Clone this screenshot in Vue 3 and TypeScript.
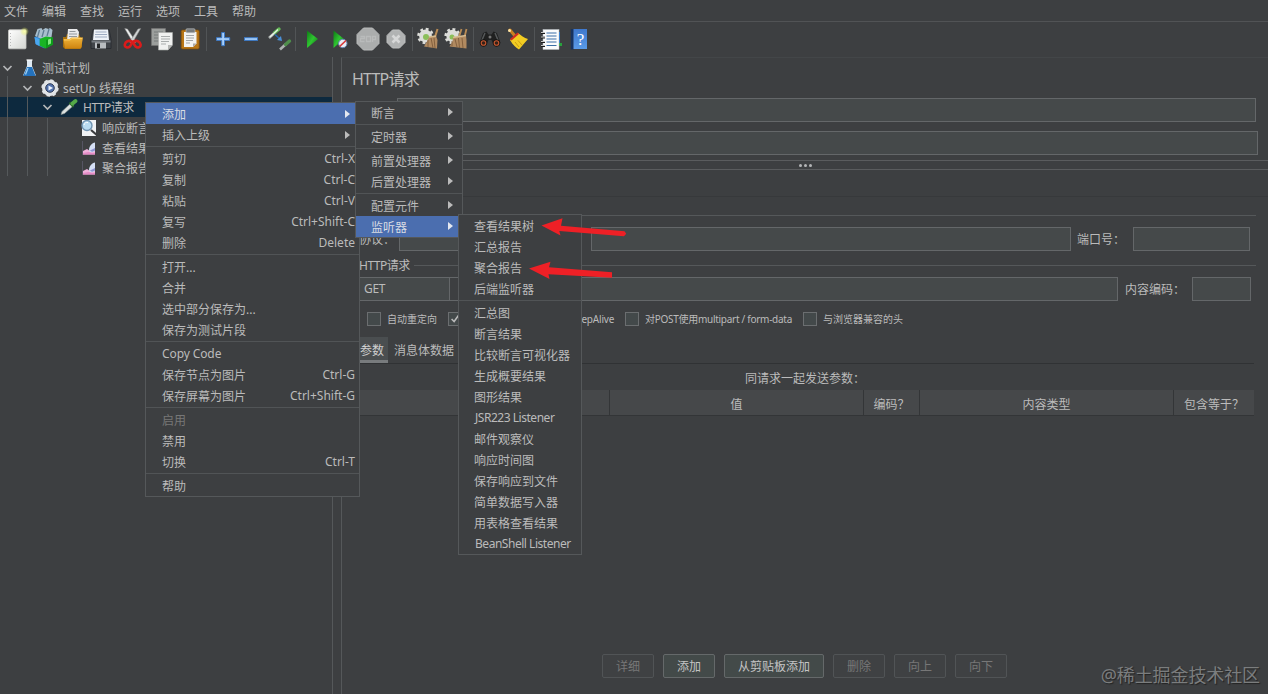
<script setup lang="ts">
interface MenuItem {
  label?: string
  keys?: string
  sub?: boolean
  active?: boolean
  disabled?: boolean
  sep?: boolean
}

const sep: MenuItem = { sep: true }
const menuBar: string[] = ['文件', '编辑', '查找', '运行', '选项', '工具', '帮助']

const contextMenu: MenuItem[] = [
  { label: '添加', sub: true, active: true },
  { label: '插入上级', sub: true },
  sep,
  { label: '剪切', keys: 'Ctrl-X' },
  { label: '复制', keys: 'Ctrl-C' },
  { label: '粘贴', keys: 'Ctrl-V' },
  { label: '复写', keys: 'Ctrl+Shift-C' },
  { label: '删除', keys: 'Delete' },
  sep,
  { label: '打开...' },
  { label: '合并' },
  { label: '选中部分保存为...' },
  { label: '保存为测试片段' },
  sep,
  { label: 'Copy Code' },
  { label: '保存节点为图片', keys: 'Ctrl-G' },
  { label: '保存屏幕为图片', keys: 'Ctrl+Shift-G' },
  sep,
  { label: '启用', disabled: true },
  { label: '禁用' },
  { label: '切换', keys: 'Ctrl-T' },
  sep,
  { label: '帮助' },
]

const addMenu: MenuItem[] = [
  { label: '断言', sub: true },
  sep,
  { label: '定时器', sub: true },
  sep,
  { label: '前置处理器', sub: true },
  { label: '后置处理器', sub: true },
  sep,
  { label: '配置元件', sub: true },
  { label: '监听器', sub: true, active: true },
]

const listenerMenu: MenuItem[] = [
  { label: '查看结果树' },
  { label: '汇总报告' },
  { label: '聚合报告' },
  { label: '后端监听器' },
  sep,
  { label: '汇总图' },
  { label: '断言结果' },
  { label: '比较断言可视化器' },
  { label: '生成概要结果' },
  { label: '图形结果' },
  { label: 'JSR223 Listener' },
  { label: '邮件观察仪' },
  { label: '响应时间图' },
  { label: '保存响应到文件' },
  { label: '简单数据写入器' },
  { label: '用表格查看结果' },
  { label: 'BeanShell Listener' },
]

const menus = [
  { cls: 'menu-main', items: contextMenu },
  { cls: 'menu-add', items: addMenu },
  { cls: 'menu-listener', items: listenerMenu },
]

const isLatin = (s?: string): boolean => /^[\x20-\x7e]+$/.test(s ?? '')

const buttons = [
  { label: '详细', enabled: false },
  { label: '添加', enabled: true },
  { label: '从剪贴板添加', enabled: true, wide: true },
  { label: '删除', enabled: false },
  { label: '向上', enabled: false },
  { label: '向下', enabled: false },
]
</script>

<template>
  <div class="window">
    <svg class="defs" width="0" height="0">
      <defs>
        <linearGradient id="gPlay" x1="0" y1="0" x2="1" y2="1"><stop offset="0" stop-color="#0d7a14" /><stop offset=".5" stop-color="#2fc431" /><stop offset="1" stop-color="#0b6d10" /></linearGradient>
        <linearGradient id="gFolder" x1="0" y1="0" x2="0" y2="1"><stop offset="0" stop-color="#f0b53a" /><stop offset="1" stop-color="#cf8410" /></linearGradient>
        <linearGradient id="gPaper" x1="0" y1="0" x2="1" y2="1"><stop offset="0" stop-color="#fff" /><stop offset="1" stop-color="#d4d6d2" /></linearGradient>
        <linearGradient id="gBook" x1="0" y1="0" x2="0" y2="1"><stop offset="0" stop-color="#3f78cc" /><stop offset="1" stop-color="#5a9be8" /></linearGradient>
        <radialGradient id="gSun"><stop offset="0" stop-color="#fbffb0" /><stop offset="1" stop-color="#e5f05a" stop-opacity="0" /></radialGradient>
      </defs>
    </svg>

    <nav class="menubar">
      <span v-for="m in menuBar" :key="m">{{ m }}</span>
    </nav>

    <div class="toolbar">
      <svg class="ico" viewBox="0 0 28 28"><rect x="5.5" y="4.8" width="17.5" height="19" rx="1" fill="url(#gPaper)" stroke="#c9cac6" stroke-width=".8" /><path d="M7.5 8v13" stroke="#bbb" stroke-dasharray="1 2" /><circle cx="21.5" cy="6.5" r="4.5" fill="url(#gSun)" /></svg>
      <svg class="ico" viewBox="0 0 28 28"><path d="M3.500 12l10-2v13.500L5 19.500z" fill="#2a7fd0" /><path d="M4 11L6.500 4l4-1 1 2 3-2 3 1 1.500-1 2.500 2-1 7-8 3z" fill="#a9bfce" /><path d="M8.500 5l-2 7M13 5l-2 7M18 4l-2 7" stroke="#5f7c92" stroke-width="1.300" /><path d="M8.500 14l6.500-2.500 7 1v7l-7.500 4-6-3z" fill="#19b524" /><path d="M15 15l7-2.500v7l-7 4z" fill="#0d9a1a" /><path d="M17 14.500l3-1v5l-3 1.500z" fill="#7fe97d" /><path d="M3.500 12l5 2v7l-4-2z" fill="#4ba6ef" /></svg>
      <svg class="ico" viewBox="0 0 28 28"><path d="M4 12h3l1-3h12l1 3 2 1v9l-2 2H6l-2-2z" fill="#aa720d" /><path d="M9 4h9l2 3-1 9H8z" fill="#e9eaeb" /><path d="M10.500 6.500h6M10 9h8M10 11.500h8" stroke="#92989c" stroke-width="1" /><path d="M4.500 14h6l2-1.500h11.500l-2 11H6z" fill="url(#gFolder)" /><path d="M5 15h6l2-1.500h10" stroke="#ffd268" fill="none" stroke-width=".8" /></svg>
      <svg class="ico" viewBox="0 0 28 28"><path d="M6 4.500h16L24 14v9.500H4V14z" fill="#404449" stroke="#272a2e" stroke-width=".8" /><path d="M7 4.500h14l1 10.500H6z" fill="#eef2f8" /><path d="M8.500 7h11M8 9.500h12M8 12h12" stroke="#9eabc1" /><path d="M4.500 15.500h19v2h-19z" fill="#777c82" /><rect x="8" y="17.500" width="11" height="6" fill="#b9bdc1" /><rect x="10" y="18.500" width="3" height="4.500" fill="#232527" /></svg>
      <i class="tsep" />
      <svg class="ico" viewBox="0 0 28 28"><path d="M4.700 3.500L7.500 4l8.500 13-2.500 1.500z" fill="#eceeed" stroke="#888" stroke-width=".5" /><path d="M20.700 3.500L18 4l-8.500 13 2.500 1.500z" fill="#cfd2d2" stroke="#888" stroke-width=".5" /><path d="M11.800 16.500c-3-1.500-6.500 0-7 3-.3 3 3 3.800 5 2 1.500-1.500 2-2.500 2-5zM13.600 16.500c3-1.500 6.500 0 7 3 .3 3-3 3.800-5 2-1.500-1.500-2-2.500-2-5z" fill="none" stroke="#db1b1b" stroke-width="2.600" /></svg>
      <svg class="ico" viewBox="0 0 28 28"><path d="M3.500 3.500h14v17h-14z" fill="#9c9f9d" stroke="#777" stroke-width=".6" /><path d="M6 7h9M6 10h6M6 13h6M6 16h5" stroke="#777b7b" /><path d="M10.500 7.500h14V20l-4.500 5h-9.500z" fill="#f0f1f0" stroke="#a9aba9" stroke-width=".6" /><path d="M13 11.500h9M13 14h9M13 16.500h8M13 19h5" stroke="#a9adad" /><path d="M24.500 20h-4.500v5z" fill="#b3b5b3" /></svg>
      <svg class="ico" viewBox="0 0 28 28"><rect x="5.200" y="5" width="18" height="19" rx="1.500" fill="#b87616" stroke="#7d4d0a" stroke-width=".7" /><path d="M8 7h12.500v11.500l-3.500 3.500H8z" fill="#f3f3f1" /><path d="M10 10.500h8M10 13h8M10 15.500h7M10 18h4" stroke="#a1a5a6" /><path d="M20.500 18.500H17V22z" fill="#aaa" /><rect x="10" y="3.800" width="9" height="4" rx="1" fill="#777b7c" stroke="#c6c8c9" stroke-width=".6" /></svg>
      <i class="tsep" />
      <svg class="ico" viewBox="0 0 28 28"><path d="M12.700 7.500h2.800v5.200h5.200v2.700h-5.200v5.300h-2.800v-5.300H7.500v-2.700h5.200z" fill="#a8d0fb" stroke="#3b78c5" stroke-width="1" /></svg>
      <svg class="ico" viewBox="0 0 28 28"><rect x="7.500" y="12.700" width="13" height="2.700" fill="#a8d0fb" stroke="#3b78c5" /></svg>
      <svg class="ico" viewBox="0 0 28 28"><path d="M4 13l6.500-6" stroke="#aeb3b2" stroke-width="2.600" /><path d="M9.500 7.800L14 4" stroke="#63b956" stroke-width="3.400" stroke-linecap="round" /><path d="M5 12l8-7.500" stroke="#e9f3e7" stroke-width="1.300" /><path d="M15 24.500l6-5.500" stroke="#aeb3b2" stroke-width="2.600" /><path d="M20.500 19.500l4-3.500" stroke="#4f8e4b" stroke-width="3.400" stroke-linecap="round" /><path d="M10 9.500l5 4.500" stroke="#2768ad" stroke-width="1.600" /><path d="M17 16l-5-1 4-4z" fill="#4a8fd6" /></svg>
      <i class="tsep" />
      <svg class="ico" viewBox="0 0 28 28"><path d="M9 5.500L20 14 9 23z" fill="url(#gPlay)" /></svg>
      <svg class="ico" viewBox="0 0 28 28"><path d="M7.500 5.500L18 14 7.500 23z" fill="url(#gPlay)" /><circle cx="16.800" cy="18.500" r="4.200" fill="#e9eef6" stroke="#6385b2" /><path d="M13.600 21.500l6.400-6" stroke="#d83a3a" stroke-width="1.700" /></svg>
      <svg class="ico" viewBox="0 0 28 28"><path d="M9.500 3h9l6.500 6.500v9L18.500 25h-9L3 18.500v-9z" fill="#abadad" stroke="#b9bbbb" /><path d="M6.500 11.500h4v2h-4v3h4M12.500 11.500h4v5h-4zM18.500 17v-5.500h3v3h-3" fill="none" stroke="#b9bbbb" stroke-width="1.300" /></svg>
      <svg class="ico" viewBox="0 0 28 28"><path d="M10.500 5h7l5.500 5.500v7L17.500 23h-7L5 17.500v-7z" fill="#b1b3b3" stroke="#bdbfbf" /><path d="M10.500 10.500l7 7M17.500 10.500l-7 7" stroke="#d6d7d7" stroke-width="2.600" /></svg>
      <i class="tsep" />
      <svg class="ico" viewBox="0 0 28 28"><circle cx="10.500" cy="11" r="6.400" fill="#dcddd9" /><circle cx="10.500" cy="11" r="7" fill="none" stroke="#dcddd9" stroke-width="2.600" stroke-dasharray="2.800 2.700" /><circle cx="11" cy="12" r="3" fill="#8bbf59" /><path d="M20 12l2.500-8" stroke="#b98c55" stroke-width="2" /><path d="M14 12l7-1 1.500 4-.5 8.500-13-2 3-5z" fill="#b18a60" /><path d="M13 15l0 7M16 13l2 10M19 13l1 10" stroke="#775536" stroke-width=".8" /><path d="M14 12l7-1" stroke="#d6bb90" stroke-width="1.600" /></svg>
      <svg class="ico" viewBox="0 0 28 28"><circle cx="9.500" cy="11" r="6.200" fill="#dcddd9" /><circle cx="9.500" cy="11" r="6.800" fill="none" stroke="#dcddd9" stroke-width="2.600" stroke-dasharray="2.800 2.500" /><circle cx="9" cy="12" r="2.500" fill="#8bbf59" /><path d="M16 12l2.500-8M21.500 12l2-8" stroke="#b98c55" stroke-width="1.800" /><path d="M10 12.500l13-2 .5 4.500v8.500l-17-2 3-5z" fill="#b18a60" /><path d="M9 16l0 5M12 14l2 8M15.500 13l1 10M19 13l1 10" stroke="#775536" stroke-width=".8" /><path d="M10 12.500l13-2" stroke="#d6bb90" stroke-width="1.600" /></svg>
      <i class="tsep" />
      <svg class="ico" viewBox="0 0 28 28"><path d="M7 8l3.500-1.500 2 3h3l2-3L21 8l3.500 10-7 2-2-5h-3l-2 5-7-2z" fill="#1f2020" /><path d="M9 8l-3 7M19 8l3 7" stroke="#56595a" stroke-width="1.500" /><circle cx="7.500" cy="18" r="3.300" fill="#352219" stroke="#111" /><circle cx="20.500" cy="18" r="3.300" fill="#352219" stroke="#111" /><circle cx="7.500" cy="18" r="2.300" fill="none" stroke="#c4562f" stroke-width="1.100" /><circle cx="20.500" cy="18" r="2.300" fill="none" stroke="#c4562f" stroke-width="1.100" /><circle cx="14" cy="12" r="1.500" fill="#777" /></svg>
      <svg class="ico" viewBox="0 0 28 28"><path d="M6 5l5 6" stroke="#c88122" stroke-width="3" stroke-linecap="round" /><circle cx="5.500" cy="5.500" r="1.500" fill="#ffe3a2" /><path d="M6 15l8-7c3 2 6 5 10 6l-9 10.500C12 23 9 20 6 15z" fill="#f2cc22" /><path d="M11 17l4 5M14 15.500l4 4.500" stroke="#c39712" stroke-width=".9" /><path d="M6 14l7.500-6.500 1.500 1.500-7.500 6.500z" fill="#cf2c23" /></svg>
      <i class="tsep" />
      <svg class="ico" viewBox="0 0 28 28"><path d="M21 7h2v12h-2z" fill="#1269c9" /><path d="M22 18h3v3h-3z" fill="#27a23c" /><rect x="6" y="4.500" width="16" height="20" fill="#fafbfc" stroke="#b8bdc2" stroke-width=".5" /><path d="M9.500 8h10M9.500 11h10M9.500 14h10M9.500 17h10M9.500 20.500h10" stroke="#3a6ea6" stroke-width="1.200" /><path d="M4 8h4M4 12.500h4M4 17h4M4 21h4" stroke="#1b1b1b" stroke-width="2" /><path d="M4 7.500h4M4 12h4M4 16.500h4M4 20.500h4" stroke="#ddd" stroke-width=".9" /></svg>
      <svg class="ico" viewBox="0 0 28 28"><path d="M5.800 4h3v20.500h-3z" fill="#17335f" /><rect x="8.500" y="4" width="13.500" height="20" fill="url(#gBook)" /><text x="15.500" y="19.500" text-anchor="middle" class="qmark">?</text></svg>
    </div>

    <main class="body">
      <aside class="tree">
        <i class="guide g1" /><i class="guide g2" /><i class="guide g3" />
        <div class="node d0">
          <svg class="chev" viewBox="0 0 10 10"><path d="M1 3l4 4 4-4" /></svg>
          <svg class="nico" viewBox="0 0 20 20"><path d="M8 2h5v6l4 9.500H4L8 8z" fill="#dfe9f2" /><path d="M8 9h5l3.700 9H4.300z" fill="#2472bd" /><path d="M9 10l-2.500 6.500" stroke="#9cd0f5" stroke-width="1.300" /><path d="M7.500 2h6" stroke="#fff" stroke-width="1.200" /></svg>
          <span>测试计划</span>
        </div>
        <div class="node d1">
          <svg class="chev" viewBox="0 0 10 10"><path d="M1 3l4 4 4-4" /></svg>
          <svg class="nico" viewBox="0 0 20 20"><circle cx="10" cy="10" r="6" fill="none" stroke="#e1e4e7" stroke-width="4" /><circle cx="10" cy="10" r="7.600" fill="none" stroke="#e1e4e7" stroke-width="2.200" stroke-dasharray="3.200 2.770" /><circle cx="10" cy="10" r="4.300" fill="#5272ad" stroke="#34405a" /><path d="M8.500 7.500L13 10l-4.500 2.500z" fill="#edf4ff" /></svg>
          <span>setUp 线程组</span>
        </div>
        <div class="node d2 selected">
          <svg class="chev" viewBox="0 0 10 10"><path d="M1 3l4 4 4-4" /></svg>
          <svg class="nico" viewBox="0 0 20 20"><path d="M1 17.500l1-3L11 6l2.500 2.500-9 8z" fill="#dbe0df" stroke="#8b9391" stroke-width=".6" /><path d="M9.500 5.500l4 4.500" stroke="#286629" stroke-width="2" /><path d="M12.500 6.500L15.500 4" stroke="#54aa48" stroke-width="4" stroke-linecap="round" /></svg>
          <span class="tight">HTTP请求</span>
        </div>
        <div class="node d3">
          <svg class="nico" viewBox="0 0 20 20"><path d="M3 2h14v16H3z" fill="#f1f3f5" /><path d="M12 12l7 6" stroke="#3b3d3f" stroke-width="2.200" /><circle cx="8" cy="7.500" r="5" fill="#b9dcf2" stroke="#7094b2" stroke-width="1.400" /><path d="M5 7c.5-2 2-3 4-2.500" stroke="#fff" fill="none" /></svg>
          <span>响应断言</span>
        </div>
        <div v-for="label in ['查看结果树', '聚合报告']" :key="label" class="node d3">
          <svg class="nico" viewBox="0 0 20 20"><path d="M3.500 3v14" stroke="#565563" fill="none" /><path d="M4 16.500V13l4-2 3 2 5-5v8.500z" fill="#f1b2dc" /><path d="M4 16.500V15l5-1 7 1v1.500z" fill="#e58cc6" /><path d="M10 12c0-4 3-7 6-7.500v8c-2 3-6 2-6-.5z" fill="#d5e0f5" /><path d="M11 12.500c1 1.500 3 1.500 5 0V10z" fill="#8f95d3" /></svg>
          <span>{{ label }}</span>
        </div>
      </aside>

      <section class="panel">
        <h1>HTTP请求</h1>
        <div class="field name" />
        <div class="field comment" />
        <div class="splitter"><b /><b /><b /></div>
        <div class="tabline" />
        <div class="group first" />
        <div class="row server">
          <span class="lbl proto">协议：</span>
          <div class="field f-proto" />
          <div class="field f-host" />
          <span class="lbl port">端口号：</span>
          <div class="field f-port" />
        </div>
        <div class="group"><span class="tight">HTTP请求</span><i /></div>
        <div class="row request">
          <div class="combo"><span>GET</span><svg viewBox="0 0 10 10"><path d="M1 3l4 4 4-4" /></svg></div>
          <div class="field f-path" />
          <span class="lbl enc">内容编码：</span>
          <div class="field f-enc" />
        </div>
        <div class="checks">
          <i class="box" /><span class="c1">自动重定向</span>
          <i class="box"><svg viewBox="0 0 14 14"><path d="M3 7l3 3 5-7" /></svg></i><span class="c2" />
          <i class="box" /><span class="c3">使用 KeepAlive</span>
          <i class="box" /><span class="c4">对POST使用multipart / form-data</span>
          <i class="box" /><span class="c5">与浏览器兼容的头</span>
        </div>
        <div class="tabs"><span class="on">参数</span><span>消息体数据</span></div>
        <div class="caption">同请求一起发送参数：</div>
        <div class="thead">
          <span /><span>值</span><span>编码？</span><span>内容类型</span><span>包含等于？</span>
        </div>
        <div class="tbody" />
        <footer>
          <button v-for="b in buttons" :key="b.label" :class="{ enabled: b.enabled, wide: b.wide }">{{ b.label }}</button>
        </footer>
      </section>
    </main>

    <div v-for="m in menus" :key="m.cls" class="menu" :class="m.cls">
      <template v-for="(it, i) in m.items" :key="i">
        <hr v-if="it.sep">
        <div v-else class="item" :class="{ active: it.active, disabled: it.disabled }">
          <span class="label" :class="{ latin: isLatin(it.label) }">{{ it.label }}</span>
          <span v-if="it.keys" class="keys">{{ it.keys }}</span>
          <i v-if="it.sub" class="tri" />
        </div>
      </template>
    </div>

    <svg class="arrows" viewBox="0 0 1268 694">
      <path d="M541.500 225.500L562.500 218.300 561 225.800 624.500 231.200 626.200 233.800 624 236.200 559.300 230.900 560.500 235.500z" />
      <path d="M529 268.500L550.500 261.700 549 267.200 612 272.200V277.800L548.500 274.200 549.500 279z" />
    </svg>
    <div class="watermark">@稀土掘金技术社区</div>
  </div>
</template>

<style>
body { margin: 0; overflow: hidden; background: #3d3f41; }
</style>

<style scoped>
* { box-sizing: border-box; }
.window { position: relative; width: 1268px; height: 694px; overflow: hidden; display: flex; flex-direction: column; background: #3d3f41; color: #bbb; font: 12px/20px "Noto Sans", "Noto Sans CJK SC", sans-serif; white-space: nowrap; }
.defs { position: absolute; }
.menubar { display: flex; gap: 14px; height: 22px; padding: 2px 4px 0; border-bottom: 1px solid #515355; flex: none; }
.toolbar { display: flex; height: 35px; padding: 3px 0 0 3px; flex: none; }
.ico { width: 28px; height: 28px; flex: none; }
.qmark { font: 17px "Liberation Serif", serif; fill: #fff; }
.tsep { width: 1px; height: 24px; margin: 2px 2px 0; background: #515456; }
.body { display: flex; flex: 1; min-height: 0; }
.tree { position: relative; width: 333px; border-right: 1px solid #55585a; padding-top: 1px; flex: none; }
.node { display: flex; align-items: center; height: 20px; }
.node span { padding-top: 2px; }
.node.selected { background: #0d293e; margin-top: -1px; margin-bottom: 1px; }
.tight { letter-spacing: -.5px; }
.d0 { padding-left: 2px; } .d1 { padding-left: 22px; } .d2 { padding-left: 42px; } .d3 { padding-left: 79px; }
.chev { width: 11px; height: 10px; margin-right: 6px; }
.chev path { fill: none; stroke: #b5b7b8; stroke-width: 1.700; }
.nico { width: 20px; height: 20px; margin-right: 3px; flex: none; }
.d1 .nico { margin-left: 1px; }
.d2 .chev { margin-right: 7px; }
.guide { position: absolute; width: 1px; background: #55595b; bottom: 518px; z-index: 1; }
.g1 { left: 7px; top: 19px; } .g2 { left: 27px; top: 39px; } .g3 { left: 47px; top: 61px; }
.panel { display: flex; flex-direction: column; flex: 1; margin-left: 8px; border-left: 1px solid #55585a; border-top: 1px solid #434648; min-width: 0; }
h1 { margin: 9px 0 0 10px; font-size: 16px; line-height: 24px; height: 31px; font-weight: 400; letter-spacing: -.8px; flex: none; }
.field { height: 24px; background: #45494a; border: 1px solid #646769; flex: none; }
.name { margin-left: 55px; width: 859px; }
.comment { margin: 9px 0 0 55px; width: 861px; }
.splitter { display: flex; gap: 2px; justify-content: center; align-items: center; height: 10px; margin-top: 5px; border: solid #5a5c5e; border-width: 1px 0; flex: none; }
.splitter b { width: 3px; height: 3px; border-radius: 2px; background: #b4b6b7; }
.tabline { height: 27px; border-bottom: 1px solid #37393b; flex: none; }
.group { display: flex; align-items: center; height: 20px; margin: 4px 12px 0 17px; flex: none; }
.group span { line-height: 22px; }
.group i { flex: 1; height: 1px; background: #55585a; margin: 0 0 2px 4px; }
.group.first { height: 1px; margin-top: 18px; background: #55585a; }
.row { display: flex; align-items: flex-start; height: 25px; flex: none; }
.lbl { line-height: 26px; flex: none; }
.server { margin-top: 11px; padding-left: 17px; }
.proto { width: 40px; }
.f-proto { width: 120px; } .f-host { width: 480px; margin-left: 72px; }
.port { margin-left: 6px; width: 56px; } .f-port { width: 117px; }
.request { margin-top: 1px; padding-left: 14px; }
.combo { display: flex; align-items: center; width: 114px; height: 24px; border: 1px solid #646769; flex: none; }
.combo span { width: 93px; line-height: 22px; padding-left: 7px; background: #45494a; border-right: 1px solid #646769; letter-spacing: -.3px; flex: none; }
.combo svg { width: 10px; margin-left: 7px; fill: none; stroke: #aaa; flex: none; }
.f-path { margin-left: 90px; width: 558px; }
.enc { margin-left: 7px; width: 67px; } .f-enc { width: 59px; }
.checks { display: flex; align-items: center; height: 16px; margin: 9px 0 0 25px; font-size: 10px; line-height: 16px; flex: none; }
.box { width: 14px; height: 14px; background: #43494a; border: 1px solid #6b6e70; flex: none; margin-right: 6px; }
.box svg { display: block; fill: none; stroke: #bbb; stroke-width: 1.800; }
.checks span { flex: none; }
.c1 { width: 61px; } .c2 { width: 60px; } .c3 { width: 77px; letter-spacing: -.2px; } .c4 { width: 158px; letter-spacing: -.28px; }
.tabs { display: flex; height: 27px; margin: 10px 14px 0 15px; border-bottom: 1px solid #303234; line-height: 28px; flex: none; }
.tabs span { padding: 0 3px; height: 26px; margin-right: 3px; }
.tabs .on { background: #4a4e50; border-bottom: 3px solid #787b7d; padding: 0 4px 0 3px; color: #d0d0d0; }
.caption { height: 26px; padding-left: 403px; line-height: 29px; flex: none; }
.thead { display: grid; grid-template-columns: 252px 254px 56px 254px 81px; height: 26px; margin-left: 15px; width: 897px; background: #46484a; border-bottom: 1px solid #333537; line-height: 29px; text-align: center; flex: none; }
.thead span { overflow: hidden; }
.thead span + span { border-left: 1px solid #333537; }
.tbody { flex: 1; }
footer { display: flex; gap: 9px; margin: 0 0 16px 260px; flex: none; }
button { width: 52px; height: 24px; padding: 1px 0 0; border: 1px solid #515456; border-radius: 2px; background: #3f4143; color: #777; font: inherit; line-height: 22px; }
button.wide { width: 100px; }
button.enabled { background: #434a49; border-color: #65696a; color: #c4c4c4; }
.menu { position: absolute; background: #3d3f41; border: 1px solid #55585a; }
.menu-main { left: 145px; top: 102px; width: 215px; }
.menu-add { left: 355px; top: 101px; width: 108px; }
.menu-listener { left: 458px; top: 214px; width: 124px; }
.item { display: flex; align-items: flex-start; justify-content: space-between; height: 21px; padding: 0 4px 0 15px; line-height: 21px; }
.item.active { background: #4b6eaf; color: #d8dce4; }
.menu-add .item.active { margin-right: 4px; padding-right: 0; }
.item.disabled { color: #777; }
.label { line-height: 23px; }
.label.latin { line-height: 21px; letter-spacing: -.1px; }
.menu-listener .label.latin { letter-spacing: -.47px; padding-left: 1px; }
.menu-main .item { padding-left: 16px; }
.tri { align-self: center; border: solid transparent; border-width: 4.500px 0 4.500px 5px; border-left-color: #bbb; margin-right: 5px; }
.menu-add .tri { margin-bottom: 1px; }
.active .tri { border-left-color: #e4e8f0; }
hr { height: 1px; margin: 1px 0; border: 0; background: #515456; }
.arrows { position: absolute; left: 0; top: 0; width: 1268px; height: 694px; fill: #ee2026; }
.watermark { position: absolute; right: 8px; bottom: 5px; font-size: 18px; line-height: 28px; color: #7b7d7e; text-shadow: 1px 1px 1px #222; letter-spacing: -.1px; }
</style>
